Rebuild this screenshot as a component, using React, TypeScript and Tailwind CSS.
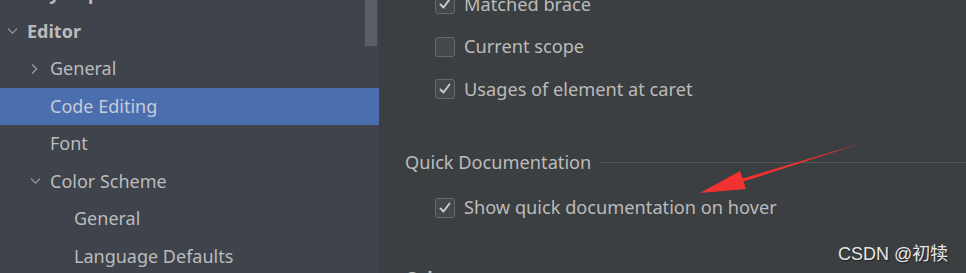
import { ChevronDown, ChevronRight } from "lucide-react";

const font = { fontFamily: '"Noto Sans", "Open Sans", sans-serif' };

type Row = { label: string; indent: number; chevron?: "down" | "right"; bold?: boolean; selected?: boolean };

const rows: Row[] = [
  { label: "Keymap", indent: 27, bold: true },
  { label: "Editor", indent: 27, chevron: "down", bold: true },
  { label: "General", indent: 50, chevron: "right" },
  { label: "Code Editing", indent: 50, selected: true },
  { label: "Font", indent: 50 },
  { label: "Color Scheme", indent: 50, chevron: "down" },
  { label: "General", indent: 74 },
  { label: "Language Defaults", indent: 74 },
];

const Check = ({ checked }: { checked: boolean }) => (
  <div className="flex h-[20px] w-[20px] shrink-0 items-center justify-center rounded-[3px] border border-[#666a6d] bg-[#43494a]">
    {checked && (
      <svg width="14" height="14" viewBox="0 0 14 14">
        <path d="M2.5 7.5 L5.5 10.5 L11.5 2.5" fill="none" stroke="#c8c8c8" strokeWidth="2" strokeLinecap="round" strokeLinejoin="round" />
      </svg>
    )}
  </div>
);

const Option = ({ label, checked }: { label: string; checked: boolean }) => (
  <div className="flex h-[42.5px] items-center gap-[9px] pl-[56px]">
    <Check checked={checked} />
    <span className="text-[18.2px] text-[#bbbbbb]">{label}</span>
  </div>
);

export default function App() {
  return (
    <div className="relative flex h-[273px] w-[966px] overflow-hidden bg-[#3c3f41]" style={font}>
      <div className="relative w-[379px] shrink-0 bg-[#3e434c]">
        <div className="mt-[-25px] flex flex-col">
          {rows.map((r, i) => (
            <div
              key={i}
              className={`relative flex h-[37.5px] items-center text-[18px] ${r.selected ? "bg-[#4b6eaf] text-[#c5cbd6]" : "text-[#bbbbbb]"} ${r.bold ? "font-bold" : ""}`}
              style={{ paddingLeft: r.indent }}
            >
              {r.chevron === "down" && (
                <ChevronDown className="absolute top-1/2 -translate-y-1/2 text-[#9da0a4]" size={17} strokeWidth={1.6} style={{ left: r.indent - 23 }} />
              )}
              {r.chevron === "right" && (
                <ChevronRight className="absolute top-1/2 -translate-y-1/2 text-[#9da0a4]" size={17} strokeWidth={1.6} style={{ left: r.indent - 24 }} />
              )}
              <span>{r.label}</span>
            </div>
          ))}
        </div>
        <div className="absolute right-[2px] top-0 h-[46px] w-[12px] bg-[#5a5e66]" />
      </div>

      <div className="flex flex-1 flex-col">
        <div className="mt-[-17px]">
          <Option label="Matched brace" checked />
          <Option label="Current scope" checked={false} />
          <Option label="Usages of element at caret" checked />
        </div>
        <div className="mt-[38px] flex items-center gap-[10px] pl-[26px]">
          <span className="text-[18.2px] text-[#bbbbbb]">Quick Documentation</span>
          <div className="h-px flex-1 bg-[#545658]" />
        </div>
        <div className="mt-[11px]">
          <Option label="Show quick documentation on hover" checked />
        </div>
        <div className="mt-[36px] pl-[26px] text-[18.2px] font-bold text-[#bbbbbb]">Other</div>
      </div>

      <svg className="pointer-events-none absolute left-0 top-0" width="966" height="273">
        <polygon
          points="862,143 743.5,181.6 746,189 700,193 740,171 742.6,178.6"
          fill="#f23230"
        />
      </svg>

      <div
        className="absolute left-[838px] top-[241px] text-[18px] text-[#e6e6e6]"
        style={{ fontFamily: '"Liberation Sans", "Noto Sans CJK SC", sans-serif', textShadow: "1px 1px 1px rgba(0,0,0,0.5)" }}
      >
        CSDN @初犊
      </div>
    </div>
  );
}
